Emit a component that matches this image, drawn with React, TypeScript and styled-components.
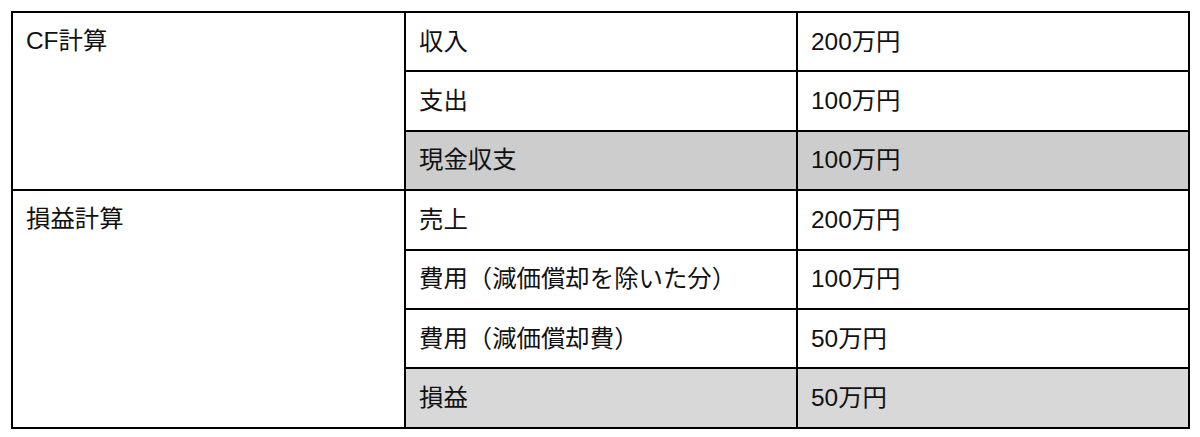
import React from 'react';
import styled, { createGlobalStyle } from 'styled-components';

const GlobalStyle = createGlobalStyle`
  html, body {
    margin: 0;
    padding: 0;
    background: #ffffff;
  }
  body {
    font-family: "Liberation Sans", "Noto Sans CJK JP", sans-serif;
    color: #111111;
  }
`;

const Page = styled.div`
  padding: 11px 12px 0 11px;
`;

const Table = styled.table`
  width: 1177px;
  border-collapse: collapse;
  border: 2px solid #000;
  table-layout: fixed;
`;

const Row = styled.tr`
  height: 59.4px;
`;

const Cell = styled.td<{ $shade?: string }>`
  border: 2px solid #000;
  padding: 0 13px;
  font-size: 24.4px;
  line-height: 28px;
  vertical-align: middle;
  background: ${(p) => p.$shade || '#ffffff'};
`;

const GroupCell = styled(Cell)`
  vertical-align: top;
  padding-top: 14px;
`;

type Item = { label: string; value: string; shade?: string };
type Group = { name: string; items: Item[] };

const groups: Group[] = [
  {
    name: 'CF計算',
    items: [
      { label: '収入', value: '200万円' },
      { label: '支出', value: '100万円' },
      { label: '現金収支', value: '100万円', shade: '#cdcdcd' },
    ],
  },
  {
    name: '損益計算',
    items: [
      { label: '売上', value: '200万円' },
      { label: '費用（減価償却を除いた分）', value: '100万円' },
      { label: '費用（減価償却費）', value: '50万円' },
      { label: '損益', value: '50万円', shade: '#d8d8d8' },
    ],
  },
];

const App = () => {
  return (
    <>
      <GlobalStyle />
      <Page>
        <Table>
          <colgroup>
            <col style={{ width: '393px' }} />
            <col style={{ width: '392px' }} />
            <col style={{ width: '392px' }} />
          </colgroup>
          <tbody>
            {groups.map((g) =>
              g.items.map((it, i) => (
                <Row key={g.name + i}>
                  {i === 0 && <GroupCell rowSpan={g.items.length}>{g.name}</GroupCell>}
                  <Cell $shade={it.shade}>{it.label}</Cell>
                  <Cell $shade={it.shade}>{it.value}</Cell>
                </Row>
              ))
            )}
          </tbody>
        </Table>
      </Page>
    </>
  );
};

export default App;
